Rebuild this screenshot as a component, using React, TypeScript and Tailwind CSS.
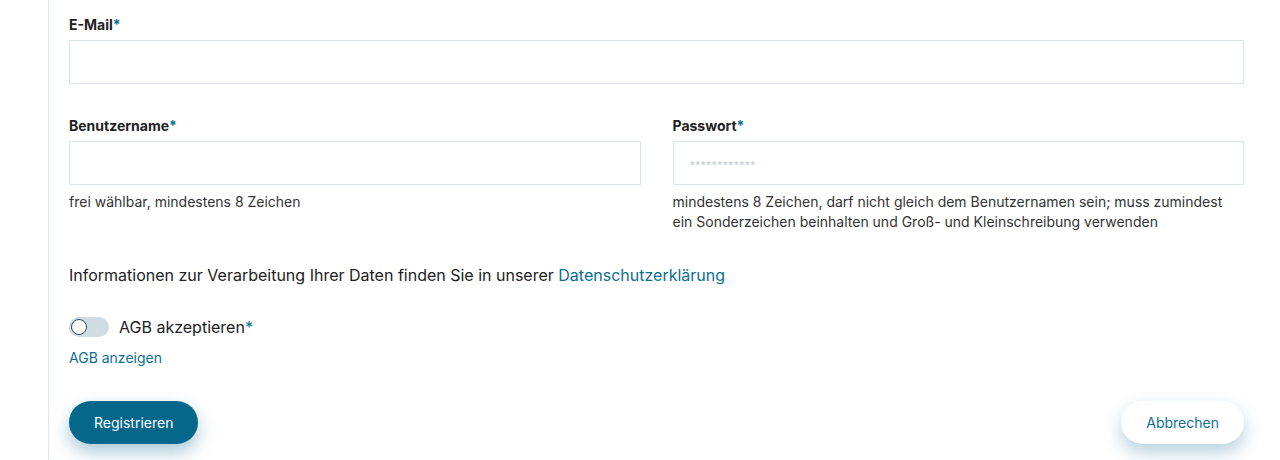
import { useState } from 'react';

const font = { fontFamily: 'Inter, "Noto Sans", sans-serif' };

function Label({ text }: { text: string }) {
  return (
    <label className="block text-sm leading-5 font-bold text-[#222]">
      {text}
      <span className="text-[#0b6f8f]">*</span>
    </label>
  );
}

function Input({ type = 'text', placeholder }: { type?: string; placeholder?: string }) {
  return (
    <input
      type={type}
      placeholder={placeholder}
      className="mt-[5px] block w-full h-11 border border-[#dbe6ea] bg-white px-4 text-sm placeholder:text-[11px] placeholder:text-[#c5ccd0] outline-none"
    />
  );
}

export default function App() {
  const [agb, setAgb] = useState(false);

  return (
    <div className="min-h-[460px] bg-white text-[#222]" style={font}>
      <div className="ml-12 min-h-[460px] border-l border-[#dde8ec] pl-5 pr-9 pt-[15px]">
        <div>
          <Label text="E-Mail" />
          <Input type="email" />
        </div>

        <div className="mt-8 grid grid-cols-2 gap-8">
          <div>
            <Label text="Benutzername" />
            <Input />
            <p className="mt-[7px] text-sm leading-5 text-[#333]">frei wählbar, mindestens 8 Zeichen</p>
          </div>
          <div>
            <Label text="Passwort" />
            <Input type="password" placeholder="************" />
            <p className="mt-[7px] text-sm leading-5 text-[#333]">
              mindestens 8 Zeichen, darf nicht gleich dem Benutzernamen sein; muss zumindest ein Sonderzeichen beinhalten und Groß- und Kleinschreibung verwenden
            </p>
          </div>
        </div>

        <p className="mt-[31px] text-base leading-6 text-[#222]">
          Informationen zur Verarbeitung Ihrer Daten finden Sie in unserer{' '}
          <a href="#" className="text-[#0b6f8f]">Datenschutzerklärung</a>
        </p>

        <div className="mt-7 flex items-center gap-[10px] h-6">
          <button
            onClick={() => setAgb(!agb)}
            className={`relative h-5 w-10 rounded-full ${agb ? 'bg-[#0b6f8f]' : 'bg-[#cfdde3]'}`}
          >
            <span
              className={`absolute top-[2px] h-4 w-4 rounded-full border-[1.5px] border-[#1f4e5f] bg-white ${agb ? 'left-[22px]' : 'left-[2px]'}`}
            />
          </button>
          <span className="text-base leading-6 text-[#222]">
            AGB akzeptieren<span className="text-[#0b6f8f]">*</span>
          </span>
        </div>

        <a href="#" className="mt-[9px] block text-sm leading-5 text-[#0b6f8f]">AGB anzeigen</a>

        <div className="mt-[33px] flex items-center justify-between">
          <button className="h-[43px] rounded-full bg-[#05678a] px-[25px] text-sm text-white shadow-[0_8px_18px_rgba(0,100,140,0.35)]">
            Registrieren
          </button>
          <button className="h-[43px] rounded-full bg-white px-[25px] text-sm text-[#0b6f8f] shadow-[0_8px_18px_rgba(0,100,140,0.3)]">
            Abbrechen
          </button>
        </div>
      </div>
    </div>
  );
}
